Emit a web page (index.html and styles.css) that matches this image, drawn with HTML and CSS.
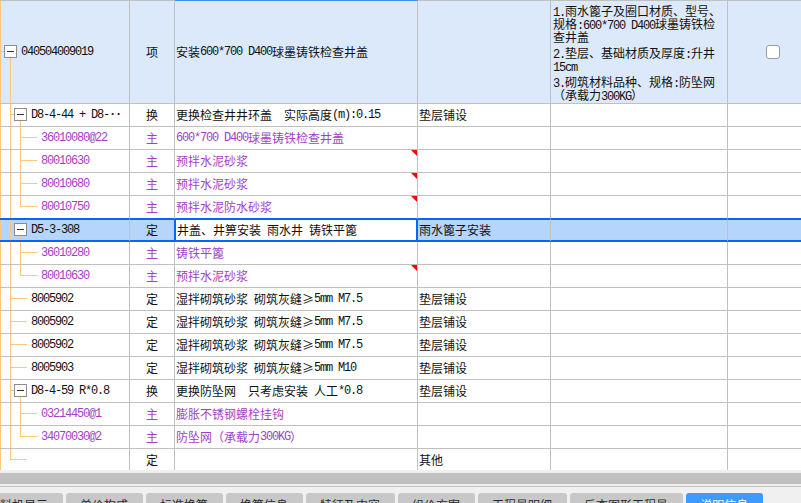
FILE: index.html
```html
<!DOCTYPE html>
<html lang="zh-CN">
<head>
<meta charset="utf-8">
<title>清单</title>
<link rel="stylesheet" href="styles.css">
</head>
<body>
<div class="grid">
  <div class="row root">
    <div class="c code">
      <svg class="tr" width="21" height="102"><line x1="0.5" y1="0" x2="0.5" y2="102"/><line x1="0" y1="50.5" x2="4" y2="50.5"/><line x1="10.5" y1="57" x2="10.5" y2="102"/><rect x="4.5" y="44.5" width="12" height="12"/><line class="mn" x1="7" y1="50.5" x2="14" y2="50.5"/></svg>
      <span class="m">040504009019</span>
    </div>
    <div class="c t">项</div>
    <div class="c d top">安装<span class="m">600*700 D400</span>球墨铸铁检查井盖</div>
    <div class="c f"></div>
    <div class="c notes">
      <p><span class="m">1.</span>雨水篦子及圈口材质、型号、<br>规格<span class="m">:600*700 D400</span>球墨铸铁检<br>查井盖</p>
      <p><span class="m">2.</span>垫层、基础材质及厚度<span class="m">:</span>升井<br><span class="m">15cm</span></p>
      <p><span class="m">3.</span>砌筑材料品种、规格<span class="m">:</span>防坠网<br>（承载力<span class="m">300KG</span>）</p>
    </div>
    <div class="c chk"><span class="box"></span></div>
  </div>

  <div class="row">
    <div class="c code">
      <svg class="tr" width="31" height="22"><line x1="0.5" y1="0" x2="0.5" y2="22"/><line x1="10.5" y1="0" x2="10.5" y2="22"/><line x1="10" y1="10.5" x2="14" y2="10.5"/><line x1="20.5" y1="17" x2="20.5" y2="22"/><rect x="14.5" y="4.5" width="12" height="12"/><line class="mn" x1="17" y1="10.5" x2="24" y2="10.5"/></svg>
      <span class="m">D8-4-44 + D8-</span><span class="m dots">··</span>
    </div>
    <div class="c t">换</div>
    <div class="c d">更换检查井井环盖<span class="m">  </span>实际高度<span class="m">(m):0.15</span></div>
    <div class="c f">垫层铺设</div>
    <div class="c"></div>
    <div class="c"></div>
  </div>

  <div class="row pur">
    <div class="c code">
      <svg class="tr" width="41" height="22"><line x1="0.5" y1="0" x2="0.5" y2="22"/><line x1="10.5" y1="0" x2="10.5" y2="22"/><line x1="20.5" y1="0" x2="20.5" y2="22"/><line x1="20" y1="10.5" x2="37" y2="10.5"/></svg>
      <span class="m">36010080@22</span>
    </div>
    <div class="c t">主</div>
    <div class="c d"><span class="m">600*700 D400</span>球墨铸铁检查井盖</div>
    <div class="c f"></div>
    <div class="c"></div>
    <div class="c"></div>
  </div>

  <div class="row pur">
    <div class="c code">
      <svg class="tr" width="41" height="22"><line x1="0.5" y1="0" x2="0.5" y2="22"/><line x1="10.5" y1="0" x2="10.5" y2="22"/><line x1="20.5" y1="0" x2="20.5" y2="22"/><line x1="20" y1="10.5" x2="37" y2="10.5"/></svg>
      <span class="m">80010630</span>
    </div>
    <div class="c t">主</div>
    <div class="c d flag">预拌水泥砂浆</div>
    <div class="c f"></div>
    <div class="c"></div>
    <div class="c"></div>
  </div>

  <div class="row pur">
    <div class="c code">
      <svg class="tr" width="41" height="22"><line x1="0.5" y1="0" x2="0.5" y2="22"/><line x1="10.5" y1="0" x2="10.5" y2="22"/><line x1="20.5" y1="0" x2="20.5" y2="22"/><line x1="20" y1="10.5" x2="37" y2="10.5"/></svg>
      <span class="m">80010680</span>
    </div>
    <div class="c t">主</div>
    <div class="c d flag">预拌水泥砂浆</div>
    <div class="c f"></div>
    <div class="c"></div>
    <div class="c"></div>
  </div>

  <div class="row pur pre">
    <div class="c code">
      <svg class="tr" width="41" height="22"><line x1="0.5" y1="0" x2="0.5" y2="22"/><line x1="10.5" y1="0" x2="10.5" y2="22"/><line x1="20.5" y1="0" x2="20.5" y2="11"/><line x1="20" y1="10.5" x2="37" y2="10.5"/></svg>
      <span class="m">80010750</span>
    </div>
    <div class="c t">主</div>
    <div class="c d flag">预拌水泥防水砂浆</div>
    <div class="c f"></div>
    <div class="c"></div>
    <div class="c"></div>
  </div>

  <div class="row sel">
    <div class="c code">
      <svg class="tr" width="31" height="20"><line x1="0.5" y1="0" x2="0.5" y2="20"/><line x1="10.5" y1="0" x2="10.5" y2="20"/><line x1="10" y1="9.5" x2="14" y2="9.5"/><line x1="20.5" y1="16" x2="20.5" y2="20"/><rect x="14.5" y="3.5" width="12" height="12"/><line class="mn" x1="17" y1="9.5" x2="24" y2="9.5"/></svg>
      <span class="m">D5-3-308</span>
    </div>
    <div class="c t">定</div>
    <div class="c d">井盖、井箅安装<span class="m"> </span>雨水井<span class="m"> </span>铸铁平篦</div>
    <div class="c f">雨水篦子安装</div>
    <div class="c"></div>
    <div class="c"></div>
  </div>

  <div class="row pur">
    <div class="c code">
      <svg class="tr" width="41" height="22"><line x1="0.5" y1="0" x2="0.5" y2="22"/><line x1="10.5" y1="0" x2="10.5" y2="22"/><line x1="20.5" y1="0" x2="20.5" y2="22"/><line x1="20" y1="10.5" x2="37" y2="10.5"/></svg>
      <span class="m">36010280</span>
    </div>
    <div class="c t">主</div>
    <div class="c d">铸铁平篦</div>
    <div class="c f"></div>
    <div class="c"></div>
    <div class="c"></div>
  </div>

  <div class="row pur">
    <div class="c code">
      <svg class="tr" width="41" height="22"><line x1="0.5" y1="0" x2="0.5" y2="22"/><line x1="10.5" y1="0" x2="10.5" y2="22"/><line x1="20.5" y1="0" x2="20.5" y2="11"/><line x1="20" y1="10.5" x2="37" y2="10.5"/></svg>
      <span class="m">80010630</span>
    </div>
    <div class="c t">主</div>
    <div class="c d flag">预拌水泥砂浆</div>
    <div class="c f"></div>
    <div class="c"></div>
    <div class="c"></div>
  </div>

  <div class="row">
    <div class="c code">
      <svg class="tr" width="31" height="22"><line x1="0.5" y1="0" x2="0.5" y2="22"/><line x1="10.5" y1="0" x2="10.5" y2="22"/><line x1="10" y1="10.5" x2="27" y2="10.5"/></svg>
      <span class="m">8005902</span>
    </div>
    <div class="c t">定</div>
    <div class="c d">湿拌砌筑砂浆<span class="m"> </span>砌筑灰缝≥<span class="m">5mm M7.5</span></div>
    <div class="c f">垫层铺设</div>
    <div class="c"></div>
    <div class="c"></div>
  </div>

  <div class="row">
    <div class="c code">
      <svg class="tr" width="31" height="22"><line x1="0.5" y1="0" x2="0.5" y2="22"/><line x1="10.5" y1="0" x2="10.5" y2="22"/><line x1="10" y1="10.5" x2="27" y2="10.5"/></svg>
      <span class="m">8005902</span>
    </div>
    <div class="c t">定</div>
    <div class="c d">湿拌砌筑砂浆<span class="m"> </span>砌筑灰缝≥<span class="m">5mm M7.5</span></div>
    <div class="c f">垫层铺设</div>
    <div class="c"></div>
    <div class="c"></div>
  </div>

  <div class="row">
    <div class="c code">
      <svg class="tr" width="31" height="22"><line x1="0.5" y1="0" x2="0.5" y2="22"/><line x1="10.5" y1="0" x2="10.5" y2="22"/><line x1="10" y1="10.5" x2="27" y2="10.5"/></svg>
      <span class="m">8005902</span>
    </div>
    <div class="c t">定</div>
    <div class="c d">湿拌砌筑砂浆<span class="m"> </span>砌筑灰缝≥<span class="m">5mm M7.5</span></div>
    <div class="c f">垫层铺设</div>
    <div class="c"></div>
    <div class="c"></div>
  </div>

  <div class="row">
    <div class="c code">
      <svg class="tr" width="31" height="22"><line x1="0.5" y1="0" x2="0.5" y2="22"/><line x1="10.5" y1="0" x2="10.5" y2="22"/><line x1="10" y1="10.5" x2="27" y2="10.5"/></svg>
      <span class="m">8005903</span>
    </div>
    <div class="c t">定</div>
    <div class="c d">湿拌砌筑砂浆<span class="m"> </span>砌筑灰缝≥<span class="m">5mm M10</span></div>
    <div class="c f">垫层铺设</div>
    <div class="c"></div>
    <div class="c"></div>
  </div>

  <div class="row">
    <div class="c code">
      <svg class="tr" width="31" height="22"><line x1="0.5" y1="0" x2="0.5" y2="22"/><line x1="10.5" y1="0" x2="10.5" y2="22"/><line x1="10" y1="10.5" x2="14" y2="10.5"/><line x1="20.5" y1="17" x2="20.5" y2="22"/><rect x="14.5" y="4.5" width="12" height="12"/><line class="mn" x1="17" y1="10.5" x2="24" y2="10.5"/></svg>
      <span class="m">D8-4-59 R*0.8</span>
    </div>
    <div class="c t">换</div>
    <div class="c d">更换防坠网<span class="m">  </span>只考虑安装<span class="m"> </span>人工<span class="m">*0.8</span></div>
    <div class="c f">垫层铺设</div>
    <div class="c"></div>
    <div class="c"></div>
  </div>

  <div class="row pur">
    <div class="c code">
      <svg class="tr" width="41" height="22"><line x1="0.5" y1="0" x2="0.5" y2="22"/><line x1="10.5" y1="0" x2="10.5" y2="22"/><line x1="20.5" y1="0" x2="20.5" y2="22"/><line x1="20" y1="10.5" x2="37" y2="10.5"/></svg>
      <span class="m">03214450@1</span>
    </div>
    <div class="c t">主</div>
    <div class="c d">膨胀不锈钢螺栓挂钩</div>
    <div class="c f"></div>
    <div class="c"></div>
    <div class="c"></div>
  </div>

  <div class="row pur">
    <div class="c code">
      <svg class="tr" width="41" height="22"><line x1="0.5" y1="0" x2="0.5" y2="22"/><line x1="10.5" y1="0" x2="10.5" y2="22"/><line x1="20.5" y1="0" x2="20.5" y2="11"/><line x1="20" y1="10.5" x2="37" y2="10.5"/></svg>
      <span class="m">34070030@2</span>
    </div>
    <div class="c t">主</div>
    <div class="c d">防坠网（承载力<span class="m">300KG</span>）</div>
    <div class="c f"></div>
    <div class="c"></div>
    <div class="c"></div>
  </div>

  <div class="row">
    <div class="c code">
      <svg class="tr" width="31" height="22"><line x1="0.5" y1="0" x2="0.5" y2="22"/><line x1="10.5" y1="0" x2="10.5" y2="11"/><line x1="10" y1="10.5" x2="27" y2="10.5"/></svg>
    </div>
    <div class="c t">定</div>
    <div class="c d"></div>
    <div class="c f">其他</div>
    <div class="c"></div>
    <div class="c"></div>
  </div>
</div>

<div class="bottom">
  <div class="hscroll"></div>
  <div class="rule"></div>
  <div class="tabs">
    <div class="tab">工料机显示</div>
    <div class="tab">单价构成</div>
    <div class="tab">标准换算</div>
    <div class="tab">换算信息</div>
    <div class="tab">特征及内容</div>
    <div class="tab">组价方案</div>
    <div class="tab">工程量明细</div>
    <div class="tab">反查图形工程量</div>
    <div class="tab on">说明信息</div>
  </div>
</div>
</body>
</html>
```

FILE: styles.css
```css
html, body {
  margin: 0;
  padding: 0;
}
body {
  width: 801px;
  height: 503px;
  overflow: hidden;
  background: #f0f0f0;
  font-family: "Noto Sans CJK SC", "Noto Sans", sans-serif;
  font-size: 12px;
  color: #111;
}

.grid {
  height: 470px;
  overflow: hidden;
  background: #fff;
}

.row {
  display: grid;
  grid-template-columns: 130px 45px 243px 133px 177px 90px;
  height: 23px;
}

.c {
  box-sizing: border-box;
  min-width: 0;
  display: flex;
  align-items: center;
  overflow: hidden;
  white-space: pre;
  line-height: 16px;
  border-right: 1px solid #c0c0c0;
  border-bottom: 1px solid #c0c0c0;
}

.m {
  font-family: "Liberation Mono", monospace;
  font-size: 12px;
  letter-spacing: -1.2px;
}
.dots {
  font-weight: bold;
}

.tr {
  flex: none;
  display: block;
}
.tr line {
  stroke: #fcc77b;
  stroke-width: 1;
  shape-rendering: crispEdges;
}
.tr rect {
  fill: #fff;
  stroke: #8c8c8c;
  stroke-width: 1;
  shape-rendering: crispEdges;
}
.tr .mn {
  stroke: #333;
}

.t {
  justify-content: center;
}
.d {
  position: relative;
  padding-left: 1px;
}
.f {
  padding-left: 1px;
}

/* red note marker */
.flag::after {
  content: "";
  position: absolute;
  top: 0;
  right: 0;
  border-style: solid;
  border-width: 0 6px 6px 0;
  border-color: transparent #ff0000 transparent transparent;
}

/* root (list item) row */
.row.root {
  height: 104px;
  background: #dce9fb;
}
.row.root .c {
  border-top: 1px solid #c0c0c0;
}
.row.root .d.top {
  border-top-color: #3b8ff3;
}
.notes {
  display: block;
  white-space: normal;
  padding: 3px 2px 0 2px;
  line-height: 13px;
}
.notes p {
  margin: 0 0 3px;
}
.notes .m {
  line-height: 0;
}
.chk {
  justify-content: center;
}
.box {
  width: 14px;
  height: 14px;
  box-sizing: border-box;
  border: 1px solid #9a9a9a;
  border-radius: 3px;
  background: #fff;
}

/* purple material rows */
.row.pur .code,
.row.pur .t,
.row.pur .d {
  color: #a23fc6;
}

/* selection */
.row.pre .c {
  border-bottom-color: #0866f2;
}
.row.sel .c {
  background: #b5d5fc;
  border-top: 1px solid #0866f2;
  border-bottom: 2px solid #0866f2;
}
.row.sel .t {
  border-right-color: #0866f2;
}
.row.sel .d {
  background: #fff;
  border-left: 1px solid #0866f2;
  border-right: 2px solid #0866f2;
}

/* bottom: scrollbar + tabs */
.bottom {
  padding-top: 3px;
}
.hscroll {
  height: 11px;
  background: #c0c0c0;
}
.rule {
  height: 1px;
  margin-top: 2px;
  background: #c0c0c0;
}
.tabs {
  display: flex;
  gap: 3px;
  margin-top: 6px;
  margin-left: -26px;
}
.tab {
  flex: none;
  height: 20px;
  padding: 3px 15px 0 14px;
  background: #c8c8c8;
  border-radius: 3px 3px 0 0;
  line-height: 17px;
  color: #2a2a2a;
  white-space: nowrap;
}
.tab.on {
  background: #3d9bff;
  color: #fff;
}
```
